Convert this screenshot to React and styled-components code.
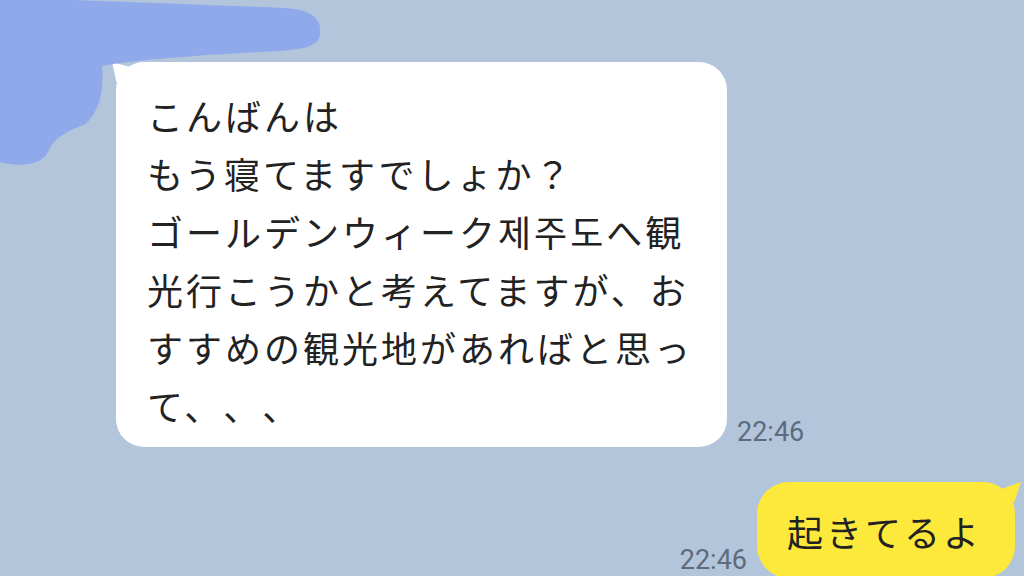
import React from 'react';
import styled, { createGlobalStyle } from 'styled-components';

const GlobalStyle = createGlobalStyle`
  body {
    margin: 0;
    background: #b2c5db;
    font-family: "Noto Sans CJK JP", "Noto Sans", sans-serif;
  }
`;

const Screen = styled.div`
  position: relative;
  width: 1024px;
  height: 576px;
  overflow: hidden;
  background: #b2c5db;
  display: flex;
  flex-direction: column;
`;

const Redaction = styled.svg`
  position: absolute;
  left: 0;
  top: 0;
  width: 330px;
  height: 170px;
  z-index: 2;
`;

const Row = styled.div`
  display: flex;
  align-items: flex-end;
  gap: 10px;
  justify-content: ${({ $mine }) => ($mine ? 'flex-end' : 'flex-start')};
  padding: ${({ $mine }) => ($mine ? '35px 9px 0 0' : '62px 0 0 116px')};
`;

const Bubble = styled.div`
  position: relative;
  box-sizing: border-box;
  width: ${({ $width }) => $width}px;
  background: ${({ $mine }) => ($mine ? '#fde93b' : '#ffffff')};
  border-radius: ${({ $mine }) => ($mine ? '32px' : '28px')};
  padding: ${({ $mine }) => ($mine ? '20px 0 18px 30px' : '24px 0 13px 31px')};
  color: #222222;
  font-size: 36px;
  letter-spacing: 3px;
  line-height: 58px;
  white-space: pre-line;
  text-spacing-trim: space-all;

  &::before {
    content: '';
    position: absolute;
    top: 0;
    width: 22px;
    height: 20px;
    background: inherit;
    ${({ $mine }) =>
      $mine
        ? `right: -6px; clip-path: polygon(0 40%, 100% 0, 70% 100%, 0 100%);`
        : `left: -4px; clip-path: polygon(0 0, 100% 30%, 100% 100%, 20% 100%);`}
  }
`;

const Time = styled.span`
  font-family: "Roboto", "Liberation Sans", sans-serif;
  font-size: 27px;
  line-height: 27px;
  color: #5e6b7a;
  padding-bottom: ${({ $mine }) => ($mine ? '4px' : '1px')};
`;

const incoming = `こんばんは
もう寝てますでしょか？
ゴールデンウィーク제주도へ観
光行こうかと考えてますが、お
すすめの観光地があればと思っ
て、、、`;

export default function App() {
  return (
    <>
      <GlobalStyle />
      <Screen>
        <Redaction viewBox="0 0 330 170">
          <path
            d="M0,0 L70,0 C130,2 210,5 285,8 C316,10 322,22 320,35 C318,48 300,50 262,52 C200,55 135,60 102,66 C104,90 100,110 86,124 C66,131 54,138 48,152 C42,164 22,168 0,162 Z"
            fill="#8fa9eb"
          />
        </Redaction>
        <Row>
          <Bubble $width={611}>{incoming}</Bubble>
          <Time>22:46</Time>
        </Row>
        <Row $mine>
          <Time $mine>22:46</Time>
          <Bubble $mine $width={258}>起きてるよ</Bubble>
        </Row>
      </Screen>
    </>
  );
}
